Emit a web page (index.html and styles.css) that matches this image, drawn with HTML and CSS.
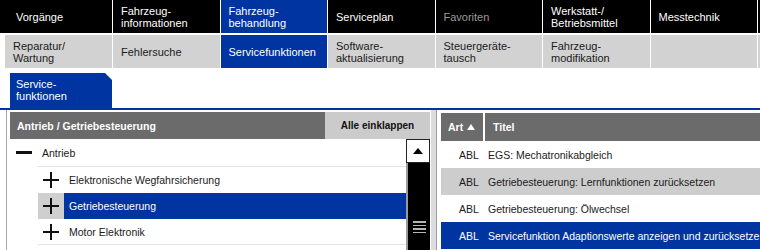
FILE: index.html
```html
<!DOCTYPE html>
<html lang="de">
<head>
<meta charset="utf-8">
<title>Servicefunktionen</title>
<link rel="stylesheet" href="styles.css">
</head>
<body>
<div class="nav nav-main">
  <div class="cell cell-first">Vorgänge</div>
  <div class="cell">Fahrzeug-<br>informationen</div>
  <div class="cell active">Fahrzeug-<br>behandlung</div>
  <div class="cell">Serviceplan</div>
  <div class="cell disabled">Favoriten</div>
  <div class="cell">Werkstatt-/<br>Betriebsmittel</div>
  <div class="cell">Messtechnik</div>
  <div class="cell"></div>
</div>
<div class="nav nav-sub">
  <div class="cell">Reparatur/<br>Wartung</div>
  <div class="cell">Fehlersuche</div>
  <div class="cell active">Servicefunktionen</div>
  <div class="cell">Software-<br>aktualisierung</div>
  <div class="cell">Steuergeräte-<br>tausch</div>
  <div class="cell">Fahrzeug-<br>modifikation</div>
  <div class="cell"></div>
  <div class="cell"></div>
</div>
<div class="tabs">
  <div class="tab">Service-<br>funktionen</div>
</div>
<div class="workspace">
  <div class="left-panel">
    <div class="lp-header">
      <div class="lp-title">Antrieb / Getriebesteuerung</div>
      <div class="lp-btn">Alle einklappen</div>
    </div>
    <div class="lp-body">
      <div class="tree">
        <div class="node level0">
          <span class="toggle"><span class="minus"></span></span>
          <span class="label">Antrieb</span>
        </div>
        <div class="children">
          <div class="node level1">
            <span class="toggle"><span class="plus"></span></span>
            <span class="label">Elektronische Wegfahrsicherung</span>
          </div>
          <div class="node level1 selected">
            <span class="toggle"><span class="plus"></span></span>
            <span class="label">Getriebesteuerung</span>
          </div>
          <div class="node level1 last">
            <span class="toggle"><span class="plus"></span></span>
            <span class="label">Motor Elektronik</span>
          </div>
        </div>
      </div>
      <div class="scrollbar">
        <div class="sb-up"><span class="sb-arrow"></span></div>
        <div class="sb-track">
          <div class="sb-grip"><span></span><span></span><span></span><span></span></div>
        </div>
      </div>
    </div>
  </div>
  <div class="splitter"></div>
  <div class="right-panel">
    <div class="rp-head">
      <div class="th th-art">Art <span class="sort"></span></div>
      <div class="th th-title">Titel</div>
    </div>
    <div class="row">
      <div class="td td-art">ABL</div>
      <div class="td td-title">EGS: Mechatronikabgleich</div>
    </div>
    <div class="row alt">
      <div class="td td-art">ABL</div>
      <div class="td td-title">Getriebesteuerung: Lernfunktionen zurücksetzen</div>
    </div>
    <div class="row">
      <div class="td td-art">ABL</div>
      <div class="td td-title">Getriebesteuerung: Ölwechsel</div>
    </div>
    <div class="row selected">
      <div class="td td-art">ABL</div>
      <div class="td td-title">Servicefunktion Adaptionswerte anzeigen und zurücksetzen</div>
    </div>
  </div>
</div>
</body>
</html>
```

FILE: styles.css
```css
* { box-sizing: border-box; }

html, body {
  margin: 0;
  padding: 0;
  width: 760px;
  height: 250px;
  overflow: hidden;
  background: #fff;
  font-family: "Liberation Sans", Arial, sans-serif;
  font-size: 10.5px;
  color: #1a1a1a;
}

.nav {
  display: grid;
  column-gap: 1px;
  height: 33px;
  background: #fff;
  font-size: 11px;
}

.nav-main {
  grid-template-columns: 112px repeat(6, 106.5px) 1fr;
}

.nav-sub {
  margin-top: 2px;
  margin-left: 5px;
  grid-template-columns: 107px repeat(6, 106.5px) 1fr;
}

.cell {
  display: flex;
  align-items: center;
  padding-left: 8px;
  line-height: 12px;
  white-space: nowrap;
  overflow: hidden;
}

.nav-main .cell { background: #000; color: #fff; }
.nav-main .cell-first { padding-left: 16px; }
.nav-main .cell.disabled { color: #9a9a9a; }

.nav-sub .cell { background: #d2d2d2; color: #1a1a1a; }

.nav .cell.active { background: #0034a0; color: #fff; }

.tabs {
  height: 42px;
  padding-left: 10px;
  display: flex;
  align-items: flex-end;
  border-bottom: 2px solid #0034a0;
}

.tab {
  position: relative;
  width: 102px;
  height: 35px;
  background: #0034a0;
  color: #fff;
  font-size: 11px;
  line-height: 12px;
  padding: 5px 0 0 6px;
}

.tab::after {
  content: "";
  position: absolute;
  top: 0;
  right: 0;
  border-style: solid;
  border-width: 0 7px 7px 0;
  border-color: transparent #fff transparent transparent;
}

.workspace {
  display: flex;
  height: 140px;
}

.left-panel {
  margin-left: 6px;
  width: 425px;
  border-left: 1px solid #a8a8a8;
  padding: 2px 0 0 3px;
  display: flex;
  flex-direction: column;
}

.lp-header {
  display: flex;
  height: 27px;
}

.lp-title {
  width: 315px;
  background: #6b6b6b;
  color: #fff;
  font-weight: bold;
  display: flex;
  align-items: center;
  padding-left: 7px;
}

.lp-btn {
  width: 105px;
  background: #cbcbcb;
  color: #111;
  font-weight: bold;
  font-size: 10px;
  display: flex;
  align-items: center;
  justify-content: center;
}

.lp-body {
  display: flex;
  flex: 1;
}

.tree {
  width: 396px;
  background: #fff;
}

.node {
  display: flex;
  align-items: stretch;
  height: 26px;
}

.node.level0 {
  height: 27px;
}

.toggle {
  display: flex;
  align-items: center;
  justify-content: center;
  width: 28px;
}

.level1 .toggle {
  width: 26px;
}

.label {
  display: flex;
  align-items: center;
  flex: 1;
  padding-left: 4px;
}

.level1 .label { padding-left: 5px; }

.children {
  margin-left: 28px;
  border-top: 1px solid #e2e2e2;
}

.node.last {
  border-bottom: 1px solid #e2e2e2;
}

.node.selected .toggle { background: #cfcfcf; }
.node.selected .label { background: #0034a0; color: #fff; }

.minus {
  display: block;
  width: 16px;
  height: 2.5px;
  background: #111;
}

.plus {
  position: relative;
  display: block;
  width: 16px;
  height: 16px;
}

.plus::before,
.plus::after {
  content: "";
  position: absolute;
  background: #111;
}

.plus::before {
  left: 0;
  top: 7px;
  width: 16px;
  height: 2px;
}

.plus::after {
  left: 7px;
  top: 0;
  width: 2px;
  height: 16px;
}

.scrollbar {
  width: 24px;
  display: flex;
  flex-direction: column;
}

.sb-up {
  height: 24px;
  background: #fff;
  border: 1px solid #222;
  display: flex;
  align-items: center;
  justify-content: center;
}

.sb-arrow {
  display: block;
  border-style: solid;
  border-width: 0 5.5px 6px 5.5px;
  border-color: transparent transparent #000 transparent;
}

.sb-track {
  flex: 1;
  background: #000;
  border-left: 2px solid #9a9a9a;
  display: flex;
  justify-content: center;
  padding-top: 58px;
}

.sb-grip {
  display: flex;
  flex-direction: column;
  gap: 2px;
  width: 13px;
}

.sb-grip span {
  display: block;
  height: 1.5px;
  background: #b5b5b5;
}

.splitter {
  width: 6px;
  background: #dcdcdc;
  border-right: 1px solid #9c9c9c;
}

.right-panel {
  flex: 1;
  padding: 3px 0 0 4px;
  min-width: 0;
  overflow: hidden;
}

.rp-head {
  display: flex;
  height: 28px;
}

.th {
  background: #6b6b6b;
  color: #fff;
  font-weight: bold;
  display: flex;
  align-items: center;
  white-space: nowrap;
}

.th-art {
  width: 42px;
  padding-left: 7px;
  margin-right: 2px;
}

.sort {
  display: inline-block;
  margin-left: 4px;
  border-style: solid;
  border-width: 0 4px 6px 4px;
  border-color: transparent transparent #fff transparent;
}

.th-title {
  flex: 1;
  padding-left: 8px;
}

.row {
  display: flex;
  height: 27px;
  background: #fff;
  white-space: nowrap;
}

.row.alt { background: #cdcdcd; }
.row.selected { background: #0034a0; color: #fff; }

.td {
  display: flex;
  align-items: center;
}

.td-art {
  width: 44px;
  padding-left: 18px;
}

.td-title {
  flex: 1;
  padding-left: 3px;
  overflow: hidden;
}
```
